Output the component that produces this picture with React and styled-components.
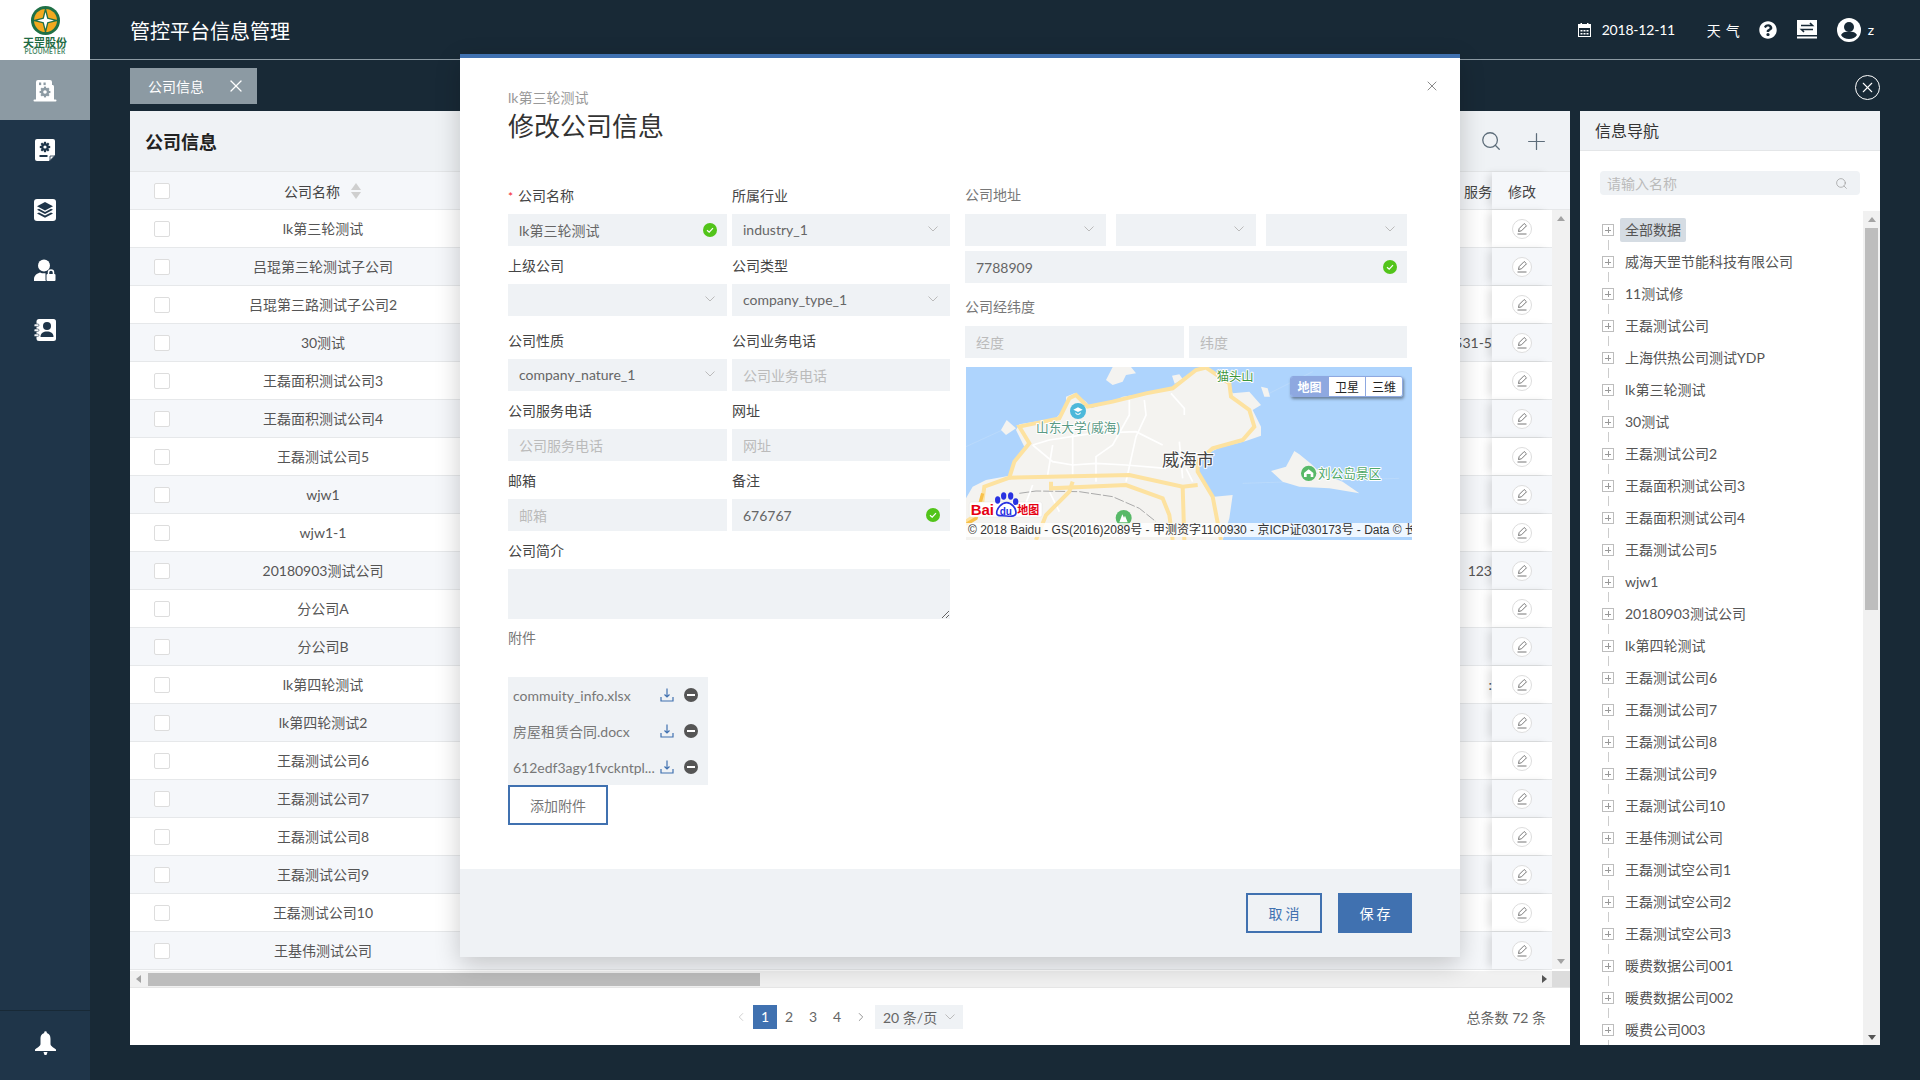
import React from 'react';
import styled, { createGlobalStyle } from 'styled-components';
import { FaQuestionCircle } from 'react-icons/fa';
import { Search, Plus, X, ChevronLeft, ChevronRight } from 'lucide-react';

const BLUE = '#4071b0';
const FIELD = '#eff2f5';
const DARK = '#182936';
const NAVY = '#1f3549';
const SLATE = '#8c9aa3';

const GlobalStyle = createGlobalStyle`
  html, body { margin: 0; padding: 0; background: ${DARK}; }
  * { box-sizing: border-box; }
  body {
    width: 1920px;
    height: 1080px;
    overflow: hidden;
    font-family: Lato, "Noto Sans CJK SC", sans-serif;
    font-size: 14px;
    color: #555;
  }
`;

const Shell = styled.div`
  position: relative;
  display: grid;
  grid-template-columns: 90px 1fr;
  width: 1920px;
  height: 1080px;
`;

const Sidebar = styled.aside`
  display: flex;
  flex-direction: column;
  background: ${NAVY};
`;

const LogoBox = styled.div`
  height: 60px;
  background: #fff;
  display: flex;
  flex-direction: column;
  align-items: center;
  padding-top: 6px;
`;

const LogoName = styled.div`
  font-size: 11px;
  line-height: 11px;
  font-weight: 700;
  color: #1f6b43;
  margin-top: 2px;
`;

const LogoLatin = styled.div`
  font-size: 6.5px;
  line-height: 7px;
  font-weight: 700;
  letter-spacing: 0.2px;
  color: #4d8a68;
`;

const NavItem = styled.div`
  height: 60px;
  display: flex;
  align-items: center;
  justify-content: center;
  background: ${(p) => (p.$active ? SLATE : 'transparent')};
`;

const BellBox = styled.div`
  margin-top: auto;
  height: 70px;
  border-top: 1px solid #182936;
  display: flex;
  align-items: center;
  justify-content: center;
  padding-bottom: 4px;
`;

const Main = styled.div`
  display: flex;
  flex-direction: column;
  min-width: 0;
`;

const TopBar = styled.header`
  height: 60px;
  border-bottom: 1px solid ${SLATE};
  display: flex;
  align-items: center;
  padding: 0 46px 0 40px;
  color: #fff;
`;

const AppTitle = styled.h1`
  margin: 2px 0 0;
  font-size: 20px;
  font-weight: 400;
  line-height: 28px;
`;

const TopTools = styled.div`
  margin-left: auto;
  display: flex;
  align-items: center;
`;

const DateText = styled.span`
  margin-left: 11px;
  width: 105px;
  letter-spacing: -0.2px;
`;

const Weather = styled.span`
  letter-spacing: 5px;
  width: 52px;
`;

const ToolIcon = styled.span`
  display: flex;
  margin-right: ${(p) => p.$gap}px;
`;

const TabRow = styled.div`
  height: 51px;
  padding: 8px 40px 7px 40px;
  display: flex;
  align-items: center;
  justify-content: space-between;
`;

const Tab = styled.div`
  width: 127px;
  height: 36px;
  background: ${SLATE};
  color: #fff;
  display: flex;
  align-items: center;
  justify-content: space-between;
  padding: 0 11px 0 18px;
`;

const CloseAll = styled.button`
  width: 25px;
  height: 25px;
  margin-top: 2px;
  padding: 0;
  border-radius: 50%;
  border: 1px solid #fff;
  background: transparent;
  color: #fff;
  display: flex;
  align-items: center;
  justify-content: center;
`;

const Panels = styled.div`
  height: 934px;
  padding: 0 40px;
  display: flex;
  gap: 10px;
`;

const TableCard = styled.section`
  width: 1440px;
  background: #fff;
  display: flex;
  flex-direction: column;
  overflow: hidden;
`;

const CardHead = styled.div`
  height: 61px;
  background: ${FIELD};
  border-bottom: 1px solid #e4e6e8;
  display: flex;
  align-items: center;
  padding: 0 20px 0 15px;
  color: #5d6d7a;
`;

const CardTitle = styled.h2`
  margin: 0 auto 0 0;
  font-size: 18px;
  font-weight: 700;
  color: #222;
`;

const HeadTool = styled.span`
  display: flex;
  margin-left: 21px;
`;

const TableGrid = styled.div`
  display: grid;
  grid-template-columns: 64px 258px 1fr 60px ${(p) => (p.$head ? '18px' : '')};
  height: 38px;
  border-bottom: 1px solid #e6e8ea;
  background: ${(p) => (p.$alt ? '#f5f7fa' : '#fff')};
  align-items: center;
  text-align: center;
  color: ${(p) => (p.$head ? '#444' : '#555')};
`;

const Check = styled.span`
  display: block;
  justify-self: center;
  width: 16px;
  height: 16px;
  background: #fff;
  border: 1px solid #ddd;
  border-radius: 2px;
`;

const HeadName = styled.span`
  display: flex;
  align-items: center;
  justify-content: center;
  gap: 11px;
  padding-right: 1px;
`;

const SortArrows = styled.span`
  display: flex;
  flex-direction: column;
  gap: 2px;
  &::before, &::after {
    content: '';
    width: 0;
    height: 0;
    border-left: 5px solid transparent;
    border-right: 5px solid transparent;
  }
  &::before { border-bottom: 7px solid #cfcfcf; }
  &::after { border-top: 7px solid #cfcfcf; }
`;

const RowName = styled.span`
  margin-bottom: 1px;
`;

const ServiceCell = styled.span`
  text-align: right;
  white-space: nowrap;
  overflow: hidden;
`;

const FixedCell = styled.span`
  position: relative;
  height: 100%;
  display: flex;
  align-items: center;
  justify-content: center;
  background: inherit;
  box-shadow: -6px 0 8px -2px rgba(0, 0, 0, 0.12);
`;

const TableBody = styled.div`
  display: flex;
  height: 759px;
`;

const RowList = styled.div`
  flex: 1;
  min-width: 0;
`;

const VTrack = styled.div`
  width: ${(p) => p.$w}px;
  background: #f1f1f1;
  display: flex;
  flex-direction: column;
  align-items: center;
  padding: 6px 0 5px;
`;

const ArrowUp = styled.span`
  width: 0;
  height: 0;
  border-left: 4px solid transparent;
  border-right: 4px solid transparent;
  border-bottom: 5px solid ${(p) => p.$c || '#a3a3a3'};
`;

const ArrowDown = styled.span`
  margin-top: auto;
  width: 0;
  height: 0;
  border-left: 4px solid transparent;
  border-right: 4px solid transparent;
  border-top: 5px solid ${(p) => p.$c || '#a3a3a3'};
`;

const VThumb = styled.div`
  width: 13px;
  height: 382px;
  margin-top: 6px;
  background: #bdbdbd;
`;

const HScroll = styled.div`
  margin-top: 2px;
  height: 17px;
  background: #f1f1f1;
  border-bottom: 1px solid #e6e6e6;
  display: flex;
  align-items: center;
`;

const ArrowLeft = styled.span`
  margin-left: 6px;
  width: 0;
  height: 0;
  border-top: 4px solid transparent;
  border-bottom: 4px solid transparent;
  border-right: 5px solid #a3a3a3;
`;

const ArrowRight = styled.span`
  margin-left: auto;
  width: 0;
  height: 0;
  border-top: 4px solid transparent;
  border-bottom: 4px solid transparent;
  border-left: 5px solid #555;
`;

const HThumb = styled.div`
  width: 612px;
  height: 13px;
  margin-left: 7px;
  background: #bdbdbd;
`;

const Corner = styled.div`
  width: 18px;
  height: 100%;
  margin-left: 5px;
  background: #dcdcdc;
`;

const PagerBar = styled.div`
  flex: 1;
  display: grid;
  grid-template-columns: 1fr auto 1fr;
  align-items: center;
  padding-right: 8px;
  color: #666;
`;

const Pager = styled.div`
  grid-column: 2;
  display: flex;
  align-items: center;
`;

const PageBtn = styled.span`
  width: 24px;
  height: 24px;
  line-height: 24px;
  display: flex;
  align-items: center;
  justify-content: center;
  background: ${(p) => (p.$on ? BLUE : 'transparent')};
  color: ${(p) => (p.$on ? '#fff' : p.$dim ? '#bbb' : '#666')};
`;

const PageSize = styled.span`
  margin-left: 2px;
  width: 88px;
  height: 24px;
  background: ${FIELD};
  display: flex;
  align-items: center;
  justify-content: space-between;
  padding: 0 8px;
`;

const Total = styled.span`
  justify-self: end;
  margin-right: 16px;
`;

const NavCard = styled.section`
  width: 300px;
  background: #fff;
  display: flex;
  flex-direction: column;
  overflow: hidden;
`;

const NavHead = styled.div`
  height: 40px;
  background: ${FIELD};
  border-bottom: 1px solid #e4e6e8;
  padding-left: 15px;
  font-size: 16px;
  line-height: 40px;
  color: #333;
`;

const NavSearch = styled.div`
  margin: 20px 20px 16px;
  height: 24px;
  background: ${FIELD};
  border-radius: 4px;
  display: flex;
  align-items: center;
  justify-content: space-between;
  padding: 0 12px 0 7px;
  color: #bbb;
`;

const TreeWrap = styled.div`
  flex: 1;
  display: flex;
  min-height: 0;
`;

const Tree = styled.ul`
  flex: 1;
  margin: 0;
  padding: 3px 0 0 22px;
  list-style: none;
  overflow: hidden;
`;

const TreeItem = styled.li`
  position: relative;
  height: 32px;
  display: flex;
  align-items: center;
  gap: 6px;
  color: #555;
`;

const Toggle = styled.span`
  position: relative;
  flex: none;
  width: 12px;
  height: 12px;
  border: 1px solid #bdbdbd;
  &::before {
    content: '';
    position: absolute;
    left: 2px;
    right: 2px;
    top: 4.5px;
    height: 1px;
    background: #999;
  }
  &::after {
    content: '';
    position: absolute;
    left: 4.5px;
    top: 2px;
    bottom: 2px;
    width: 1px;
    background: #999;
  }
`;

const Connector = styled.span`
  position: absolute;
  left: 5.5px;
  top: 26px;
  width: 1px;
  height: 10px;
  background: #ccc;
`;

const TreeLabel = styled.span`
  padding: 0 5px;
  height: 24px;
  line-height: 24px;
  border-radius: 2px;
  white-space: nowrap;
  background: ${(p) => (p.$on ? '#d5dce3' : 'transparent')};
`;

const Modal = styled.div`
  position: absolute;
  top: 54px;
  left: 460px;
  width: 1000px;
  height: 903px;
  background: #fff;
  border-top: 4px solid ${BLUE};
  box-shadow: 0 8px 24px rgba(0, 0, 0, 0.2);
  display: flex;
  flex-direction: column;
`;

const ModalClose = styled.span`
  position: absolute;
  top: 20px;
  right: 20px;
  display: flex;
  color: #777;
`;

const ModalBody = styled.div`
  flex: 1;
  padding: 32px 48px 0;
`;

const SubTitle = styled.div`
  font-size: 14px;
  line-height: 16px;
  color: #999;
`;

const ModalTitle = styled.h3`
  margin: 2px 0 0;
  font-size: 26px;
  line-height: 36px;
  font-weight: 400;
  color: #333;
`;

const FormGrid = styled.div`
  margin-top: 43px;
  display: grid;
  grid-template-columns: 442px 447px;
  column-gap: 15px;
  align-items: start;
`;

const LeftGrid = styled.div`
  display: grid;
  grid-template-columns: 219px 218px;
  column-gap: 5px;
`;

const RightColumn = styled.div`
  margin-top: -1px;
`;

const Field = styled.div`
  min-width: 0;
  margin-top: ${(p) => p.$top || 0}px;
  grid-column: ${(p) => (p.$wide ? '1 / -1' : 'auto')};
`;

const Label = styled.div`
  height: 18px;
  line-height: 18px;
  margin-bottom: ${(p) => p.$gap || 9}px;
  color: ${(p) => (p.$muted ? '#777' : '#444')};
`;

const Star = styled.span`
  color: #f5222d;
  margin-right: 5px;
  font-size: 12px;
`;

const InputWrap = styled.div`
  position: relative;
  width: ${(p) => (p.$w ? `${p.$w}px` : 'auto')};
`;

const Input = styled.input`
  display: block;
  width: 100%;
  height: 32px;
  border: 0;
  outline: 0;
  padding: 0 11px;
  background: ${FIELD};
  font: inherit;
  color: #666;
  &::placeholder { color: #bbb; opacity: 1; }
`;

const TextBox = styled.textarea`
  display: block;
  width: 100%;
  height: 50px;
  border: 0;
  outline: 0;
  padding: 6px 11px;
  background: ${FIELD};
  font: inherit;
  resize: vertical;
`;

const Select = styled.div`
  height: 32px;
  padding: 0 12px 2px 11px;
  background: ${FIELD};
  display: flex;
  align-items: center;
  justify-content: space-between;
  color: #666;
`;

const ValidMark = styled.span`
  position: absolute;
  right: 10px;
  top: 9px;
  display: flex;
`;

const AddressRow = styled.div`
  display: grid;
  grid-template-columns: 141px 140px 141px;
  column-gap: 10px;
  width: 442px;
  margin-bottom: 5px;
`;

const LatLngRow = styled.div`
  display: grid;
  grid-template-columns: 219px 218px;
  column-gap: 5px;
  width: 442px;
  margin-top: 1px;
`;

const MapBox = styled.div`
  position: relative;
  width: 446px;
  height: 173px;
  margin: 9px 0 0 1px;
  overflow: hidden;
  background: #aed4fd;
`;

const MapSvg = styled.svg`
  display: block;
`;

const MapTypes = styled.div`
  position: absolute;
  top: 9px;
  left: 324px;
  display: flex;
  height: 21px;
  border: 1px solid #8ea8e0;
  border-radius: 3px;
  overflow: hidden;
  box-shadow: 1px 2px 3px rgba(0, 0, 0, 0.4);
  font-family: "Noto Sans CJK SC", sans-serif;
  font-size: 12px;
`;

const MapType = styled.span`
  width: 37px;
  line-height: 19px;
  text-align: center;
  background: ${(p) => (p.$on ? '#8ea8e0' : '#fff')};
  color: ${(p) => (p.$on ? '#fff' : '#222')};
  font-weight: ${(p) => (p.$on ? 700 : 400)};
  border-left: ${(p) => (p.$on ? '0' : '1px solid #8ea8e0')};
`;

const MapCredit = styled.div`
  position: absolute;
  left: 0;
  right: 0;
  top: 156px;
  height: 14px;
  padding-left: 2px;
  background: rgba(255, 255, 255, 0.8);
  font-family: "Liberation Sans", "Noto Sans CJK SC", sans-serif;
  font-size: 12px;
  line-height: 14px;
  color: #333;
  white-space: nowrap;
  overflow: hidden;
`;

const Attachments = styled.div`
  margin-top: 30px;
  width: 200px;
  background: ${FIELD};
`;

const AttachRow = styled.div`
  height: 36px;
  display: flex;
  align-items: center;
  padding-left: 5px;
  color: #777;
`;

const AttachName = styled.span`
  width: 147px;
  white-space: nowrap;
  overflow: hidden;
`;

const AttachDownload = styled.span`
  display: flex;
  margin-right: 10px;
`;

const AddButton = styled.button`
  display: block;
  width: 100px;
  height: 40px;
  background: #fff;
  border: 2px solid ${BLUE};
  font: inherit;
  color: #777;
`;

const ModalFoot = styled.div`
  height: 88px;
  background: ${FIELD};
  display: flex;
  align-items: center;
  justify-content: flex-end;
  gap: 16px;
  padding-right: 48px;
`;

const FootButton = styled.button`
  width: ${(p) => p.$w}px;
  height: 40px;
  padding: 0 0 0 3px;
  border: 2px solid ${BLUE};
  background: ${(p) => (p.$primary ? BLUE : 'transparent')};
  color: ${(p) => (p.$primary ? '#fff' : BLUE)};
  font: inherit;
  letter-spacing: 3px;
`;

const Chevron = () => (
  <svg width="10" height="6" viewBox="0 0 10 6" fill="none" stroke="#bbb">
    <polyline points="0.5,0.5 5,5 9.5,0.5" />
  </svg>
);

const CheckDot = () => (
  <svg width="14" height="14" viewBox="0 0 14 14">
    <circle cx="7" cy="7" r="7" fill="#52c41a" />
    <polyline points="4,7.2 6.2,9.2 10,5.2" fill="none" stroke="#fff" strokeWidth="1.2" />
  </svg>
);

const Gear = ({ cx, cy, r, color }) => (
  <g>
    {[0, 45, 90, 135].map((a) => (
      <rect
        key={a}
        x={cx - 1.1}
        y={cy - r - 1.4}
        width="2.2"
        height={2 * r + 2.8}
        fill={color}
        transform={`rotate(${a} ${cx} ${cy})`}
      />
    ))}
    <circle cx={cx} cy={cy} r={r} fill={color} />
    <circle cx={cx} cy={cy} r={r * 0.42} fill="#fff" />
  </g>
);

const IconBuilding = () => (
  <svg width="24" height="23" viewBox="0 0 24 23">
    <path d="M3 21V3a2 2 0 0 1 2-2h12a2 2 0 0 1 2 2v3h1a2 2 0 0 1 1 2v13z" fill="#fff" />
    <rect x="0.5" y="20.5" width="23" height="2" rx="1" fill="#fff" />
    <rect x="6" y="3.5" width="2.2" height="2.6" fill={SLATE} />
    <rect x="10.5" y="3.5" width="2.2" height="2.6" fill={SLATE} />
    <g>
      {[0, 45, 90, 135].map((a) => (
        <rect key={a} x="10.9" y="7.6" width="2.2" height="10.8" fill={SLATE} transform={`rotate(${a} 12 13)`} />
      ))}
      <circle cx="12" cy="13" r="4.2" fill={SLATE} />
      <circle cx="12" cy="13" r="1.8" fill="#fff" />
    </g>
  </svg>
);

const IconDocGear = () => (
  <svg width="20" height="22" viewBox="0 0 20 22">
    <path d="M2 0h16a2 2 0 0 1 2 2v14l-6 6H2a2 2 0 0 1-2-2V2a2 2 0 0 1 2-2z" fill="#fff" />
    <path d="M15 21.5l4.5-4.5h-4.5z" fill="#fff" stroke={NAVY} strokeWidth="0.8" />
    <Gear cx={10} cy={8} r={3.8} color={NAVY} />
    <rect x="4.5" y="16" width="8" height="2" fill={NAVY} />
  </svg>
);

const IconLayers = () => (
  <svg width="22" height="22" viewBox="0 0 22 22">
    <rect width="22" height="22" rx="3" fill="#fff" />
    <path d="M11 3l8 4.2-8 4.2-8-4.2z" fill={NAVY} />
    <path d="M5 9.7l6 3.2 6-3.2 2 1.1-8 4.2-8-4.2z" fill={NAVY} />
    <path d="M5 13.4l6 3.2 6-3.2 2 1.1-8 4.2-8-4.2z" fill={NAVY} />
  </svg>
);

const IconUserLock = () => (
  <svg width="22" height="22" viewBox="0 0 22 22">
    <circle cx="10" cy="6.5" r="6" fill="#fff" />
    <path d="M0 22v-2c0-3.5 3-5.5 6-6.5 2 1 5 1 7 .5v8z" fill="#fff" />
    <rect x="11.5" y="12" width="10.5" height="10" rx="1" fill={NAVY} />
    <rect x="12.5" y="15" width="9" height="7" rx="1" fill="#fff" />
    <path d="M14.5 15.5v-2a2.5 2.5 0 0 1 5 0v2" fill="none" stroke="#fff" strokeWidth="1.5" />
  </svg>
);

const IconContacts = () => (
  <svg width="22" height="22" viewBox="0 0 22 22">
    <rect x="2.5" y="0" width="19.5" height="22" rx="2.5" fill="#fff" />
    <circle cx="13" cy="7" r="4" fill={NAVY} />
    <path d="M6.5 18c0-4 3-5.5 6.5-5.5s6.5 1.500 6.500 5.500z" fill={NAVY} />
    {[5, 10, 15].map((y) => (
      <rect key={y} x="0" y={y} width="5" height="2.4" rx="1.2" fill="#fff" stroke={NAVY} strokeWidth="0.6" />
    ))}
  </svg>
);

const IconBell = () => (
  <svg width="23" height="25" viewBox="0 0 23 25">
    <circle cx="11.500" cy="1.500" r="1.300" fill="#fff" />
    <path d="M11.500 2c3.600 0 5 2.500 5 6v5c0 2 3 3.500 5.500 5.500v1.500H1v-1.500C3.500 16.500 6.500 15 6.500 13V8c0-3.500 1.400-6 5-6z" fill="#fff" />
    <path d="M9.500 21h4l-1 3h-2z" fill="#fff" />
  </svg>
);

const IconCalendar = () => (
  <svg width="13" height="14" viewBox="0 0 13 14">
    <rect x="0.500" y="1.500" width="12" height="12" fill="none" stroke="#fff" />
    <rect x="0.500" y="1.500" width="12" height="3.500" fill="#fff" />
    <rect x="2.500" y="0" width="1.500" height="2.500" fill="#fff" />
    <rect x="9" y="0" width="1.500" height="2.500" fill="#fff" />
    {[2.500, 5.500, 8.500].map((x) =>
      [7, 10].map((y) => <rect key={`${x}-${y}`} x={x} y={y} width="2" height="1.500" fill="#fff" />)
    )}
  </svg>
);

const IconSwap = () => (
  <svg width="20" height="19" viewBox="0 0 20 19">
    <rect width="20" height="15" fill="#fff" />
    <rect y="16.500" width="20" height="2" fill="#fff" />
    <path d="M4 5.500h11.500L13 3M16 9.500H4.500L7 12" fill="none" stroke={DARK} strokeWidth="1.600" />
  </svg>
);

const IconAvatar = () => (
  <svg width="24" height="24" viewBox="0 0 24 24">
    <circle cx="12" cy="12" r="12" fill="#fff" />
    <circle cx="12" cy="9" r="5" fill={DARK} />
    <path d="M4 17c1-2.500 4-3.500 8-3.500s7 1 8 3.500c-1.500 2.500-4.500 4-8 4s-6.500-1.500-8-4z" fill={DARK} />
  </svg>
);

const IconEdit = () => (
  <svg width="20" height="20" viewBox="0 0 20 20">
    <circle cx="10" cy="10" r="9.500" fill="#fff" stroke="#ddd" />
    <path d="M6.500 12.500l.7-3 5-5 2.300 2.300-5 5z" fill="none" stroke="#777" strokeWidth="1" />
    <path d="M5.500 15h9" stroke="#777" strokeWidth="1" />
  </svg>
);

const IconDownload = () => (
  <svg width="14" height="14" viewBox="0 0 14 14" fill="none" stroke={BLUE} strokeWidth="1.200">
    <path d="M7 0.500v8M4.500 6.500L7 9l2.500-2.500" />
    <path d="M1 9v4h12V9" />
  </svg>
);

const IconMinus = () => (
  <svg width="14" height="14" viewBox="0 0 14 14">
    <circle cx="7" cy="7" r="7" fill="#555" />
    <rect x="3" y="6" width="8" height="2" fill="#fff" />
  </svg>
);

const LogoMark = () => (
  <svg width="29" height="29" viewBox="0 0 29 29">
    <circle cx="14.500" cy="14.500" r="14.500" fill="#1f7046" />
    <circle cx="14.500" cy="14.500" r="11.500" fill="#f3a91f" />
    <path d="M14.500 0.500l2.800 11.200 11.200 2.800-11.200 2.800-2.800 11.200-2.800-11.200L0.500 14.500l11.200-2.800z" fill="#1f7046" />
    <path d="M14.500 6l1.700 6.800 6.800 1.700-6.800 1.700-1.700 6.800-1.700-6.800L6 14.500l6.800-1.700z" fill="#fff" />
  </svg>
);

const haloText = { paintOrder: 'stroke', stroke: '#fff', strokeWidth: 6, strokeLinejoin: 'round' };

const MapDrawing = () => (
  <MapSvg width="446" height="173" viewBox="0 6 1338 519" fontFamily='"Noto Sans CJK SC", sans-serif'>
    <rect x="0" y="6" width="1338" height="519" fill="#aed4fd" />
    <path d="M0 245L120 190M900 90L1040 20M830 355L1300 340" stroke="#c0ddfb" strokeWidth="2" fill="none" />
    <path d="M0 400L20 365L60 345L130 332L145 290L175 245L150 195L160 178L270 160L300 125L300 95L325 85L360 110L375 130L440 110L470 95L540 85L620 70L650 40L690 12L720 8L770 40L790 60L800 85L850 80L885 120L860 135L885 185L885 212L840 228L760 248L720 268L700 290L690 320L720 370L745 395L800 390L790 460L770 525L0 525Z" fill="#f4f3f0" />
    <path d="M440 6L495 6L510 25L480 30L470 50L440 60L420 45Z" fill="#f4f3f0" />
    <path d="M618 32L640 28L650 42L626 56Z" fill="#f4f3f0" />
    <path d="M885 65L905 70L912 95L895 95Z" fill="#f4f3f0" />
    <path d="M105 195L122 165L150 190L120 210Z" fill="#f4f3f0" />
    <path d="M915 318L960 305L985 258L1000 268L1035 296L1065 325L1130 350L1180 385L1090 370L1000 365L950 350Z" fill="#f4f3f0" />
    <g fill="none" stroke="#fff" strokeWidth="5">
      <path d="M200 240L250 225L380 205L510 200L590 240" />
      <path d="M200 240L260 290L320 300L390 295L480 300L600 310" />
      <path d="M490 105L490 150L440 240L390 275L390 350" />
      <path d="M535 105L540 150L510 215L480 350" />
      <path d="M320 190L320 340M260 240L245 330M615 85L655 130L655 150" />
      <path d="M640 230L650 340M660 310L680 350M200 360L170 440M250 380L280 440" />
    </g>
    <path d="M160 385L210 378L340 380L440 395L520 430L570 470" fill="none" stroke="#aaa" strokeWidth="3" strokeDasharray="30 6" />
    <g fill="none" stroke="#fde2a0" strokeWidth="12">
      <path d="M0 470L45 440L55 365L130 338L145 290L190 235L160 185L280 160L310 100L330 90L365 125L440 110L540 85L620 70L690 15L720 8L790 55L795 95L850 135L865 185L830 225L740 250L695 290L695 320L740 395L765 525" />
      <path d="M130 338L490 330L650 365L695 360" />
      <path d="M255 350L255 370L480 360L590 400L610 450L620 525" />
      <path d="M320 350L310 380L240 450L210 525M650 365L655 525" />
    </g>
    <path d="M0 478L30 460L50 385" fill="none" stroke="#f8c14a" strokeWidth="10" />
    <circle cx="336" cy="138" r="24" fill="#4cb8da" />
    <path d="M322 134l14-7 14 7-14 7z" fill="#fff" />
    <path d="M328 141c4 7 12 7 16 0v4c-4 6-12 6-16 0z" fill="#fff" />
    <text x="210" y="201" fontSize="38" fill="#5b9a85" style={haloText}>山东大学(威海)</text>
    <text x="752" y="48" fontSize="37" fill="#3e963e" style={haloText}>猫头山</text>
    <text x="588" y="304" fontSize="52" fill="#444" style={haloText}>威海市</text>
    <circle cx="1028" cy="325" r="23" fill="#58b968" />
    <path d="M1014 336v-12l14-11 14 11v12h-8v-9h-12v9z" fill="#fff" />
    <text x="1056" y="338" fontSize="38" fill="#4fa868" style={haloText}>刘公岛景区</text>
    <circle cx="473" cy="459" r="24" fill="#58b968" />
    <path d="M460 472l9-24 5 10 3-6 8 20z" fill="#fff" />
    <g>
      <rect x="10" y="411" width="218" height="45" rx="6" fill="#fff" stroke="#ddd" />
      <text x="14" y="451" fontSize="45" fontWeight="700" fontFamily='"Liberation Sans", sans-serif' fill="#e60012">Bai</text>
      <ellipse cx="95" cy="405" rx="8" ry="11" fill="#2932e1" />
      <ellipse cx="113" cy="393" rx="8" ry="11" fill="#2932e1" />
      <ellipse cx="134" cy="393" rx="8" ry="11" fill="#2932e1" />
      <ellipse cx="149" cy="410" rx="8" ry="10" fill="#2932e1" />
      <path d="M92 445c0-16 16-32 30-32s28 16 28 30c0 10-12 12-28 10s-30 2-30-8z" fill="#fff" stroke="#2932e1" strokeWidth="5" />
      <text x="101" y="449" fontSize="30" fontWeight="700" fontFamily='"Liberation Sans", sans-serif' fill="#2932e1">du</text>
      <text x="154" y="448" fontSize="33" fontWeight="700" fill="#e60012">地图</text>
    </g>
  </MapSvg>
);

const RowNames = ['lk第三轮测试', '吕琨第三轮测试子公司', '吕琨第三路测试子公司2', '30测试', '王磊面积测试公司3', '王磊面积测试公司4', '王磊测试公司5', 'wjw1', 'wjw1-1', '20180903测试公司', '分公司A', '分公司B', 'lk第四轮测试', 'lk第四轮测试2', '王磊测试公司6', '王磊测试公司7', '王磊测试公司8', '王磊测试公司9', '王磊测试公司10', '王基伟测试公司'];

const ServiceText = { 3: '6531-5', 9: '123', 12: ':' };

const TreeNames = ['全部数据', '威海天罡节能科技有限公司', '11测试修', '王磊测试公司', '上海供热公司测试YDP', 'lk第三轮测试', '30测试', '王磊测试公司2', '王磊面积测试公司3', '王磊面积测试公司4', '王磊测试公司5', 'wjw1', '20180903测试公司', 'lk第四轮测试', '王磊测试公司6', '王磊测试公司7', '王磊测试公司8', '王磊测试公司9', '王磊测试公司10', '王基伟测试公司', '王磊测试空公司1', '王磊测试空公司2', '王磊测试空公司3', '暖费数据公司001', '暖费数据公司002', '暖费公司003'];

const Files = ['commuity_info.xlsx', '房屋租赁合同.docx', '612edf3agy1fvckntpl...'];

const App = () => (
  <Shell>
    <GlobalStyle />
    <Sidebar>
      <LogoBox>
        <LogoMark />
        <LogoName>天罡股份</LogoName>
        <LogoLatin>PLOUMETER</LogoLatin>
      </LogoBox>
      <NavItem $active><IconBuilding /></NavItem>
      <NavItem><IconDocGear /></NavItem>
      <NavItem><IconLayers /></NavItem>
      <NavItem><IconUserLock /></NavItem>
      <NavItem><IconContacts /></NavItem>
      <BellBox><IconBell /></BellBox>
    </Sidebar>

    <Main>
      <TopBar>
        <AppTitle>管控平台信息管理</AppTitle>
        <TopTools>
          <IconCalendar />
          <DateText>2018-12-11</DateText>
          <Weather>天气</Weather>
          <ToolIcon $gap={20}><FaQuestionCircle size={18} /></ToolIcon>
          <ToolIcon $gap={20}><IconSwap /></ToolIcon>
          <ToolIcon $gap={7}><IconAvatar /></ToolIcon>
          <span>z</span>
        </TopTools>
      </TopBar>

      <TabRow>
        <Tab>
          公司信息
          <X size={20} strokeWidth={1.5} />
        </Tab>
        <CloseAll><X size={17} strokeWidth={1.5} /></CloseAll>
      </TabRow>

      <Panels>
        <TableCard>
          <CardHead>
            <CardTitle>公司信息</CardTitle>
            <HeadTool><Search size={22} strokeWidth={1.4} /></HeadTool>
            <HeadTool><Plus size={27} strokeWidth={1.1} /></HeadTool>
          </CardHead>
          <TableGrid $head $alt>
            <Check />
            <HeadName>公司名称<SortArrows /></HeadName>
            <ServiceCell>服务</ServiceCell>
            <FixedCell>修改</FixedCell>
            <span />
          </TableGrid>
          <TableBody>
            <RowList>
              {RowNames.map((name, i) => (
                <TableGrid key={name} $alt={i % 2 === 1}>
                  <Check />
                  <RowName>{name}</RowName>
                  <ServiceCell>{ServiceText[i]}</ServiceCell>
                  <FixedCell><IconEdit /></FixedCell>
                </TableGrid>
              ))}
            </RowList>
            <VTrack $w={18}>
              <ArrowUp />
              <ArrowDown />
            </VTrack>
          </TableBody>
          <HScroll>
            <ArrowLeft />
            <HThumb />
            <ArrowRight />
            <Corner />
          </HScroll>
          <PagerBar>
            <Pager>
              <PageBtn $dim><ChevronLeft size={14} strokeWidth={1.2} /></PageBtn>
              <PageBtn $on>1</PageBtn>
              <PageBtn>2</PageBtn>
              <PageBtn>3</PageBtn>
              <PageBtn>4</PageBtn>
              <PageBtn><ChevronRight size={14} strokeWidth={1.2} /></PageBtn>
              <PageSize>20 条/页<Chevron /></PageSize>
            </Pager>
            <Total>总条数 72 条</Total>
          </PagerBar>
        </TableCard>

        <NavCard>
          <NavHead>信息导航</NavHead>
          <NavSearch>
            请输入名称
            <Search size={13} strokeWidth={1.3} color="#999" />
          </NavSearch>
          <TreeWrap>
            <Tree>
              {TreeNames.map((name, i) => (
                <TreeItem key={name}>
                  <Toggle />
                  <Connector />
                  <TreeLabel $on={i === 0}>{name}</TreeLabel>
                </TreeItem>
              ))}
            </Tree>
            <VTrack $w={17}>
              <ArrowUp />
              <VThumb />
              <ArrowDown $c="#555" />
            </VTrack>
          </TreeWrap>
        </NavCard>
      </Panels>
    </Main>

    <Modal>
      <ModalClose><X size={16} strokeWidth={1.3} /></ModalClose>
      <ModalBody>
        <SubTitle>lk第三轮测试</SubTitle>
        <ModalTitle>修改公司信息</ModalTitle>
        <FormGrid>
          <LeftGrid>
            <Field>
              <Label><Star>*</Star>公司名称</Label>
              <InputWrap>
                <Input readOnly value="lk第三轮测试" />
                <ValidMark><CheckDot /></ValidMark>
              </InputWrap>
            </Field>
            <Field>
              <Label>所属行业</Label>
              <Select>industry_1<Chevron /></Select>
            </Field>
            <Field $top={11}>
              <Label>上级公司</Label>
              <Select><span /><Chevron /></Select>
            </Field>
            <Field $top={11}>
              <Label>公司类型</Label>
              <Select>company_type_1<Chevron /></Select>
            </Field>
            <Field $top={16}>
              <Label>公司性质</Label>
              <Select>company_nature_1<Chevron /></Select>
            </Field>
            <Field $top={16}>
              <Label>公司业务电话</Label>
              <Input readOnly placeholder="公司业务电话" />
            </Field>
            <Field $top={11}>
              <Label>公司服务电话</Label>
              <Input readOnly placeholder="公司服务电话" />
            </Field>
            <Field $top={11}>
              <Label>网址</Label>
              <Input readOnly placeholder="网址" />
            </Field>
            <Field $top={11}>
              <Label>邮箱</Label>
              <Input readOnly placeholder="邮箱" />
            </Field>
            <Field $top={11}>
              <Label>备注</Label>
              <InputWrap>
                <Input readOnly value="676767" />
                <ValidMark><CheckDot /></ValidMark>
              </InputWrap>
            </Field>
            <Field $top={11} $wide>
              <Label>公司简介</Label>
              <TextBox readOnly />
            </Field>
            <Field $top={10} $wide>
              <Label $muted>附件</Label>
              <Attachments>
                {Files.map((file) => (
                  <AttachRow key={file}>
                    <AttachName>{file}</AttachName>
                    <AttachDownload><IconDownload /></AttachDownload>
                    <IconMinus />
                  </AttachRow>
                ))}
              </Attachments>
              <AddButton>添加附件</AddButton>
            </Field>
          </LeftGrid>

          <RightColumn>
            <Label $muted $gap={10}>公司地址</Label>
            <AddressRow>
              <Select><span /><Chevron /></Select>
              <Select><span /><Chevron /></Select>
              <Select><span /><Chevron /></Select>
            </AddressRow>
            <InputWrap $w={442}>
              <Input readOnly value="7788909" />
              <ValidMark><CheckDot /></ValidMark>
            </InputWrap>
            <Field $top={15}>
              <Label $muted $gap={10}>公司经纬度</Label>
              <LatLngRow>
                <Input readOnly placeholder="经度" />
                <Input readOnly placeholder="纬度" />
              </LatLngRow>
            </Field>
            <MapBox>
              <MapDrawing />
              <MapTypes>
                <MapType $on>地图</MapType>
                <MapType>卫星</MapType>
                <MapType>三维</MapType>
              </MapTypes>
              <MapCredit>© 2018 Baidu - GS(2016)2089号 - 甲测资字1100930 - 京ICP证030173号 - Data © 长地万方</MapCredit>
            </MapBox>
          </RightColumn>
        </FormGrid>
      </ModalBody>
      <ModalFoot>
        <FootButton $w={76}>取消</FootButton>
        <FootButton $w={74} $primary>保存</FootButton>
      </ModalFoot>
    </Modal>
  </Shell>
);

export default App;
